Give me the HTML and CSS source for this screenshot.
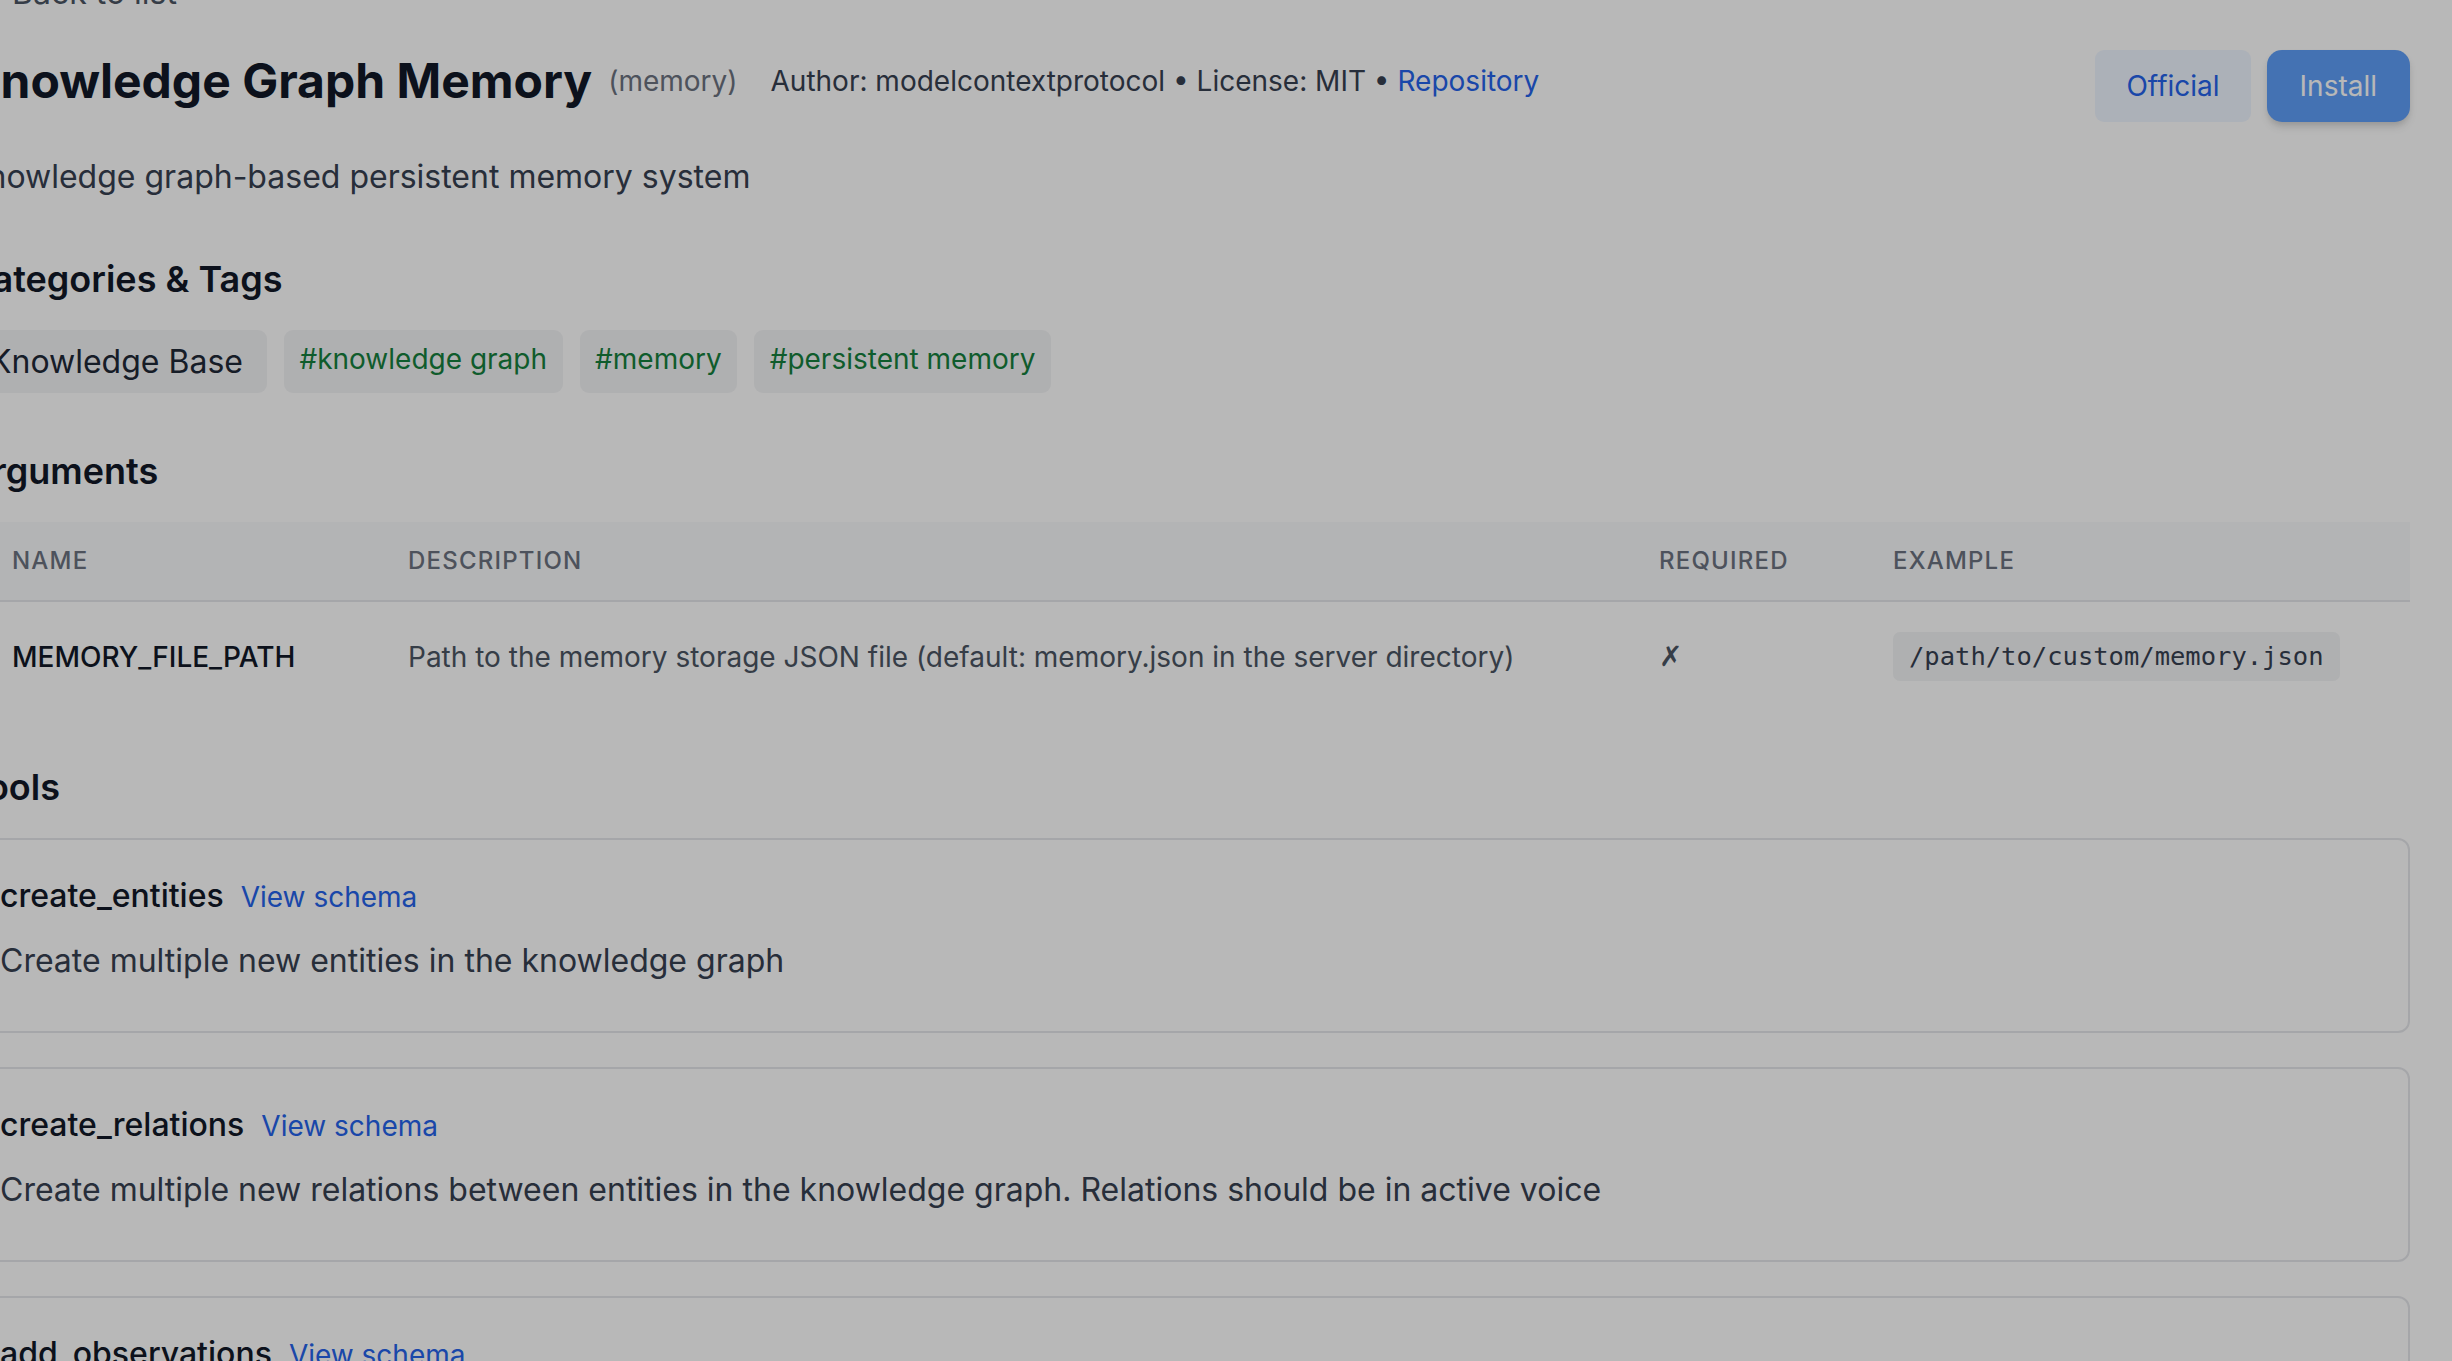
FILE: index.html
```html
<!DOCTYPE html>
<html lang="en">
<head>
<meta charset="utf-8">
<title>Knowledge Graph Memory</title>
<link rel="stylesheet" href="styles.css">
</head>
<body>
<div class="page">
  <a class="back" href="#"><svg class="back-icon" viewBox="0 0 24 24" width="32" height="32" fill="none" stroke="currentColor" stroke-width="2" stroke-linecap="round" stroke-linejoin="round"><path d="M19 12H5M12 19l-7-7 7-7"/></svg>Back to list</a>

  <div class="header">
    <div class="title-row">
      <h1 class="title">Knowledge Graph Memory</h1>
      <span class="slug">(memory)</span>
      <span class="meta">Author: modelcontextprotocol • License: MIT • <a class="link" href="#">Repository</a></span>
    </div>
    <div class="actions">
      <button class="btn btn-official">Official</button>
      <button class="btn btn-install">Install</button>
    </div>
  </div>

  <p class="summary">Knowledge graph-based persistent memory system</p>

  <h2 class="section-title">Categories &amp; Tags</h2>
  <div class="tags">
    <span class="chip chip-category">Knowledge Base</span>
    <span class="chip chip-tag">#knowledge graph</span>
    <span class="chip chip-tag">#memory</span>
    <span class="chip chip-tag">#persistent memory</span>
  </div>

  <h2 class="section-title">Arguments</h2>
  <table class="args">
    <thead>
      <tr>
        <th class="col-name">Name</th>
        <th class="col-desc">Description</th>
        <th class="col-req">Required</th>
        <th class="col-ex">Example</th>
      </tr>
    </thead>
    <tbody>
      <tr>
        <td class="arg-name">MEMORY_FILE_PATH</td>
        <td class="arg-desc">Path to the memory storage JSON file (default: memory.json in the server directory)</td>
        <td class="arg-req">✗</td>
        <td><code class="code">/path/to/custom/memory.json</code></td>
      </tr>
    </tbody>
  </table>

  <h2 class="section-title tools-title">Tools</h2>
  <div class="tools">
    <div class="tool">
      <div class="tool-head"><span class="tool-name">create_entities</span><a class="tool-link" href="#">View schema</a></div>
      <p class="tool-desc">Create multiple new entities in the knowledge graph</p>
    </div>
    <div class="tool">
      <div class="tool-head"><span class="tool-name">create_relations</span><a class="tool-link" href="#">View schema</a></div>
      <p class="tool-desc">Create multiple new relations between entities in the knowledge graph. Relations should be in active voice</p>
    </div>
    <div class="tool">
      <div class="tool-head"><span class="tool-name">add_observations</span><a class="tool-link" href="#">View schema</a></div>
      <p class="tool-desc">Add new observations to existing entities in the knowledge graph</p>
    </div>
  </div>
</div>
<div class="backdrop"></div>
</body>
</html>
```

FILE: styles.css
```css
html, body {
  margin: 0;
  padding: 0;
  background: #ffffff;
  overflow: hidden;
}

body {
  font-family: Inter, "Noto Sans", "Liberation Sans", sans-serif;
  color: #111827;
}

.page {
  width: 2444px;
  margin-left: -34px;
  margin-top: -31px;
}

.back {
  display: flex;
  align-items: center;
  gap: 14px;
  font-size: 32px;
  line-height: 48px;
  color: #4b5563;
  text-decoration: none;
}

.back-icon {
  flex: none;
}

.header {
  display: flex;
  justify-content: space-between;
  align-items: flex-start;
  margin-top: 33px;
}

.title-row {
  display: flex;
  align-items: center;
  margin-top: 2px;
}

.title {
  margin: 0;
  font-size: 48px;
  line-height: 58px;
  font-weight: 700;
  color: #111827;
}

.slug {
  margin-left: 16px;
  font-size: 28px;
  line-height: 42px;
  color: #6b7280;
}

.meta {
  margin-left: 33px;
  font-size: 28px;
  line-height: 42px;
  color: #374151;
}

.link {
  color: #2563eb;
  text-decoration: none;
}

.actions {
  display: flex;
  gap: 16px;
}

.btn {
  height: 72px;
  border: 0;
  font-family: inherit;
  font-size: 28px;
  font-weight: 400;
}

.btn-official {
  padding: 0 31px;
  background: #eff6ff;
  color: #2563eb;
  border-radius: 9px;
}

.btn-install {
  padding: 0 33px;
  background: #5f9ff8;
  color: #ffffff;
  border-radius: 15px;
  box-shadow: 0 6px 9px -1px rgba(0, 0, 0, 0.12), 0 3px 6px -2px rgba(0, 0, 0, 0.1);
}

.summary {
  margin: 31px 0 0;
  font-size: 32px;
  line-height: 48px;
  color: #374151;
}

.section-title {
  margin: 53px 0 26px;
  font-size: 36px;
  line-height: 50px;
  font-weight: 600;
  color: #111827;
}

.tags {
  display: flex;
  gap: 17px;
}

.chip {
  display: flex;
  align-items: center;
  height: 63px;
  box-sizing: border-box;
  border-radius: 9px;
  background: #f3f4f6;
}

.chip-category {
  padding: 0 24px;
  font-size: 32px;
  color: #1f2937;
}

.chip-tag {
  padding: 0 15.5px 6px;
  font-size: 28px;
  color: #15803d;
}

.args {
  width: 100%;
  border-collapse: collapse;
  table-layout: fixed;
}

.col-name { width: 350px; }
.col-desc { width: 1205px; }
.col-req { width: 188px; }
.col-ex { width: 517px; }

.args th {
  padding: 21px 0 21px 46px;
  background: #f9fafb;
  border-bottom: 2px solid #e5e7eb;
  text-align: left;
  font-size: 24px;
  line-height: 36px;
  font-weight: 500;
  letter-spacing: 0.05em;
  text-transform: uppercase;
  color: #6b7280;
}

.args td {
  padding: 30px 0 30px 46px;
  vertical-align: middle;
  font-size: 28px;
  line-height: 42px;
  white-space: nowrap;
}

.arg-name {
  font-weight: 500;
  color: #111827;
}

.arg-desc {
  color: #4b5563;
}

.arg-req {
  color: #4b5563;
  font-family: "DejaVu Sans", sans-serif;
}

.code {
  display: inline-block;
  padding: 6px 16px;
  border-radius: 7px;
  background: #f3f4f6;
  font-family: "DejaVu Sans Mono", "Liberation Mono", monospace;
  font-size: 25.5px;
  line-height: 37px;
  color: #374151;
}

.tools-title {
  margin-top: 51px;
}

.tools {
  display: flex;
  flex-direction: column;
  gap: 34px;
}

.tool {
  padding: 32px 32px 46px;
  border: 2px solid #e5e7eb;
  border-radius: 12px;
}

.tool-head {
  display: flex;
  align-items: baseline;
  gap: 17px;
}

.tool-name {
  font-size: 32px;
  line-height: 48px;
  font-weight: 500;
  color: #111827;
}

.tool-link {
  font-size: 28px;
  line-height: 48px;
  color: #2563eb;
  text-decoration: none;
}

.tool-desc {
  margin: 16px 0 0;
  font-size: 32px;
  line-height: 48px;
  color: #374151;
}

.backdrop {
  position: fixed;
  inset: 0;
  background: rgba(0, 0, 0, 0.28);
}
```
